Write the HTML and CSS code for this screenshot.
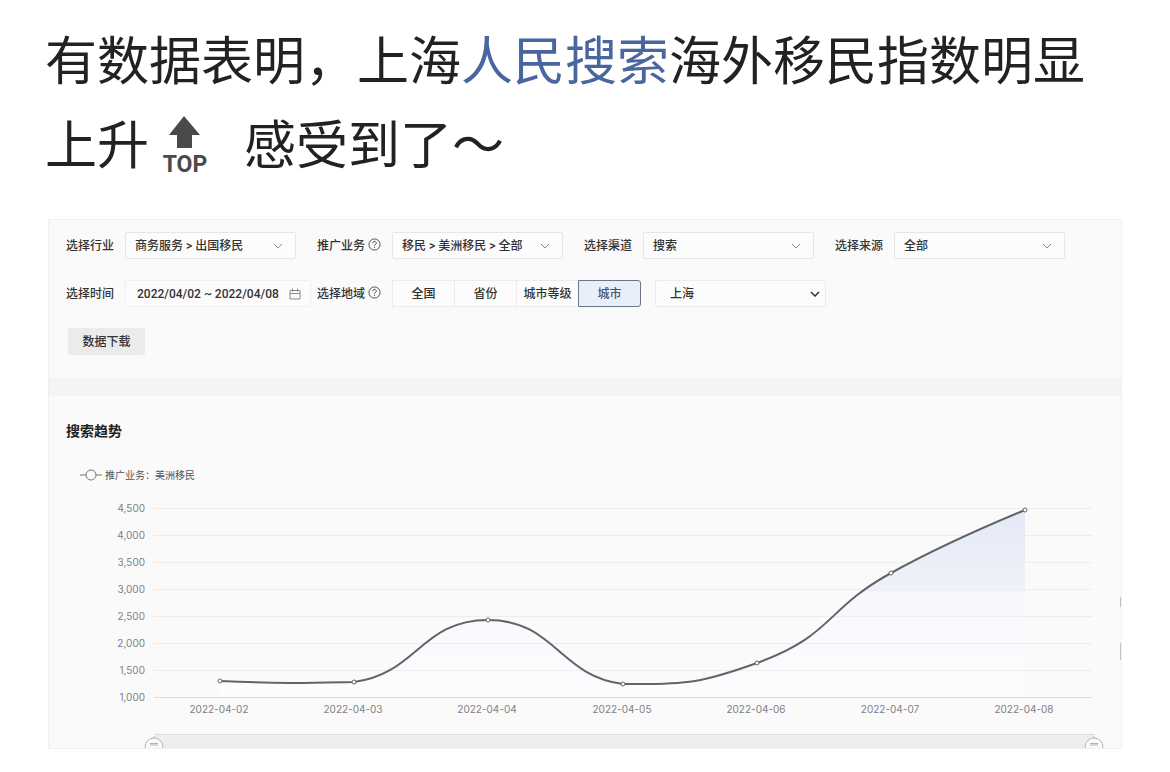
FILE: index.html
```html
<!DOCTYPE html>
<html lang="zh-CN">
<head>
    <meta charset="UTF-8">
    <meta name="viewport" content="width=device-width, initial-scale=1.0">
    <title>搜索趋势</title>
    <link rel="stylesheet" href="styles.css">
</head>
<body>
    <p class="post-text">有数据表明，上海<a href="#search">人民搜索</a>海外移民指数明显上升<svg class="top-icon" viewBox="0 0 52 64" role="img" aria-label="TOP">
            <path d="M25 0 L41 19 H33 V32 H18 V19 H10 Z" fill="#4a4a4a"/>
            <text x="26" y="56" text-anchor="middle">TOP</text>
        </svg>感受到了～</p>

    <main class="panel">
        <!-- Filters -->
        <form class="filters">
            <div class="filter-row">
                <div class="field">
                    <label for="industry">选择行业</label>
                    <div class="select">
                        <select id="industry"><option>商务服务 &gt; 出国移民</option></select>
                        <svg viewBox="0 0 10 6"><path d="M1 1 L5 5 L9 1"/></svg>
                    </div>
                </div>
                <div class="field">
                    <label for="business">推广业务
                        <svg class="help" viewBox="0 0 14 14"><circle cx="7" cy="7" r="6"/><path d="M5 5.7 C5 3 9 3 9 5.5 C9 7 7 6.9 7 8.4 M7 9.6 V10.7"/></svg>
                    </label>
                    <div class="select">
                        <select id="business"><option>移民 &gt; 美洲移民 &gt; 全部</option></select>
                        <svg viewBox="0 0 10 6"><path d="M1 1 L5 5 L9 1"/></svg>
                    </div>
                </div>
                <div class="field">
                    <label for="channel">选择渠道</label>
                    <div class="select">
                        <select id="channel"><option>搜索</option></select>
                        <svg viewBox="0 0 10 6"><path d="M1 1 L5 5 L9 1"/></svg>
                    </div>
                </div>
                <div class="field">
                    <label for="source">选择来源</label>
                    <div class="select">
                        <select id="source"><option>全部</option></select>
                        <svg viewBox="0 0 10 6"><path d="M1 1 L5 5 L9 1"/></svg>
                    </div>
                </div>
            </div>

            <div class="filter-row filter-row-tight">
                <div class="field">
                    <label for="dates">选择时间</label>
                    <div class="date">
                        <input type="text" id="dates" value="2022/04/02 ~ 2022/04/08">
                        <svg viewBox="0 0 12 12"><path d="M1 2.5 H11 V11 H1 Z M1 5.5 H11 M3.5 0.5 V3.5 M8.5 0.5 V3.5"/></svg>
                    </div>
                </div>
                <div class="field">
                    <span class="label" id="region-label">选择地域
                        <svg class="help" viewBox="0 0 14 14"><circle cx="7" cy="7" r="6"/><path d="M5 5.7 C5 3 9 3 9 5.5 C9 7 7 6.9 7 8.4 M7 9.6 V10.7"/></svg>
                    </span>
                    <div class="segments" role="group" aria-labelledby="region-label">
                        <button type="button">全国</button>
                        <button type="button">省份</button>
                        <button type="button">城市等级</button>
                        <button type="button" class="active">城市</button>
                    </div>
                </div>
                <div class="select select-city">
                    <select aria-label="城市"><option>上海</option></select>
                    <svg viewBox="0 0 10 6"><path d="M1 1 L5 5 L9 1"/></svg>
                </div>
            </div>

            <button type="button" class="download">数据下载</button>
        </form>

        <!-- Trend chart -->
        <section class="trend">
            <h2>搜索趋势</h2>
            <div class="legend">
                <svg viewBox="0 0 22 12"><path d="M0 6 H6 M16 6 H22"/><circle cx="11" cy="6" r="5"/></svg>
                推广业务：美洲移民
            </div>
            <svg class="chart" viewBox="0 0 1072 260">
                <defs>
                    <linearGradient id="area" gradientUnits="userSpaceOnUse" x1="0" y1="22" x2="0" y2="209">
                        <stop offset="0" stop-color="#e3e9f6"/>
                        <stop offset="0.43" stop-color="#f0f2f9"/>
                        <stop offset="0.45" stop-color="#f6f8fc"/>
                        <stop offset="1" stop-color="#fcfdfe"/>
                    </linearGradient>
                </defs>

                <path fill="url(#area)" d="M171 193 C238 196 260 195 305 194 C368 186 372 132 439 132 C506 132 510 188 574 196 C640 197 655 194 708 175 C785 147 775 122 842 85 C880 64 930 41 976 22 V209 H171 Z"/>

                <g class="grid">
                    <path d="M105 20.5 H1043 M105 47.5 H1043 M105 74.5 H1043 M105 101.5 H1043 M105 128.5 H1043 M105 155.5 H1043 M105 182.5 H1043"/>
                    <path class="axis" d="M105 209.5 H1043"/>
                </g>

                <g class="y-labels">
                    <text x="96" y="24">4,500</text>
                    <text x="96" y="51">4,000</text>
                    <text x="96" y="78">3,500</text>
                    <text x="96" y="105">3,000</text>
                    <text x="96" y="132">2,500</text>
                    <text x="96" y="159">2,000</text>
                    <text x="96" y="186">1,500</text>
                    <text x="96" y="213">1,000</text>
                </g>

                <g class="x-labels">
                    <text x="170" y="225">2022-04-02</text>
                    <text x="304" y="225">2022-04-03</text>
                    <text x="438" y="225">2022-04-04</text>
                    <text x="573" y="225">2022-04-05</text>
                    <text x="707" y="225">2022-04-06</text>
                    <text x="841" y="225">2022-04-07</text>
                    <text x="975" y="225">2022-04-08</text>
                </g>

                <path class="line" d="M171 193 C238 196 260 195 305 194 C368 186 372 132 439 132 C506 132 510 188 574 196 C640 197 655 194 708 175 C785 147 775 122 842 85 C880 64 930 41 976 22"/>
                <g class="points">
                    <circle cx="171" cy="193" r="2"/>
                    <circle cx="305" cy="194" r="2"/>
                    <circle cx="439" cy="132" r="2"/>
                    <circle cx="574" cy="196" r="2"/>
                    <circle cx="708" cy="175" r="2"/>
                    <circle cx="842" cy="85" r="2"/>
                    <circle cx="976" cy="22" r="2"/>
                </g>

                <!-- Scroll marks on the right edge -->
                <path d="M1071.5 109 V119 M1071.5 155 V172" stroke="#c4c4c6"/>

                <!-- Zoom slider -->
                <rect x="106" y="246" width="940" height="14" fill="#eeeeef"/>
                <path d="M106 246.5 H1046" stroke="#dededf"/>
                <g class="handles">
                    <circle cx="105" cy="259" r="9"/>
                    <path d="M101 255.5 H109 M101 257 H109 M105 248 V250"/>
                    <circle cx="1045" cy="259" r="9"/>
                    <path d="M1041 255.5 H1049 M1041 257 H1049 M1045 248 V250"/>
                </g>
            </svg>
        </section>
    </main>
</body>
</html>
```
FILE: styles.css
```css
body {
    font-family: Inter, "Noto Sans CJK SC", sans-serif;
    background-color: #fff;
    color: #333;
    font-size: 12px;
    margin: 0;
    padding: 16px 48px 24px;
}

/* Post text */
.post-text {
    font-family: "Noto Sans CJK SC", sans-serif;
    font-size: 52px;
    line-height: 84px;
    color: #222;
    margin: 0 -2px 35px -3px;
}

.post-text a {
    color: #49669f;
    text-decoration: none;
}

.top-icon {
    width: 52px;
    height: 64px;
    margin: 0 33px 0 10px;
    vertical-align: -16px;
}

.top-icon text {
    font-family: Roboto, sans-serif;
    font-size: 23px;
    font-weight: bold;
    fill: #4a4a4a;
}

/* Panel */
.panel {
    background-color: #fafafb;
    border: 1px solid #f0f0f1;
    overflow: hidden;
}

.filters {
    padding: 12px 17px 23px;
    border-bottom: 18px solid #f4f4f5;
}

.filter-row {
    display: flex;
    flex-wrap: wrap;
    gap: 21px;
    margin-bottom: 21px;
}

.filter-row-tight {
    column-gap: 6px;
}

.field {
    display: flex;
    align-items: center;
    gap: 11px;
}

.field label, .label {
    display: flex;
    align-items: center;
    gap: 3px;
    padding-bottom: 2px;
    font-weight: 500;
}

.help {
    width: 13px;
    height: 13px;
    fill: none;
    stroke: #444;
}

.select, .date {
    display: grid;
    align-items: center;
    width: 171px;
    height: 27px;
    box-sizing: border-box;
    background-color: #fcfcfc;
    border: 1px solid #e6e6e8;
    border-radius: 2px;
    font-family: Roboto, "Noto Sans CJK SC", sans-serif;
    font-weight: 500;
}

.date {
    width: 186px;
    border-color: #f0f0f1;
}

.select select, .date input {
    grid-area: 1 / 1;
    width: 100%;
    height: 25px;
    padding: 0 9px;
    border: none;
    background: none;
    appearance: none;
    box-sizing: border-box;
    font: inherit;
    color: inherit;
}

.date input {
    padding: 0 11px;
}

.select svg, .date svg {
    grid-area: 1 / 1;
    justify-self: end;
    width: 10px;
    height: 6px;
    margin-right: 12px;
    fill: none;
    stroke: #888;
    pointer-events: none;
}

.date svg {
    width: 12px;
    height: 12px;
    margin-right: 9px;
}

.select-city {
    margin-left: 8px;
    border-color: #ececee;
}

.select-city select {
    padding: 0 14px;
}

.select-city svg {
    margin-right: 5px;
    stroke: #333;
    stroke-width: 1.5;
}

.segments {
    display: flex;
}

.segments button {
    width: 63px;
    height: 27px;
    padding: 0 0 2px;
    background-color: #fcfcfc;
    border: 1px solid #ececee;
    font: inherit;
    font-weight: 500;
    color: inherit;
}

.segments button + button {
    margin-left: -1px;
}

.segments .active {
    background-color: #e9eefb;
    border-color: #6b7488;
    border-radius: 0 3px 3px 0;
    color: #4d556b;
}

.download {
    display: block;
    width: 77px;
    height: 27px;
    margin-left: 2px;
    padding: 0 0 2px;
    background-color: #ebebec;
    border: none;
    border-radius: 2px;
    font: inherit;
    font-weight: 500;
    color: inherit;
}

/* Trend chart */
.trend h2 {
    margin: 0;
    padding: 25px 17px 0;
    font-size: 14px;
    line-height: 20px;
    color: #222;
}

.legend {
    display: flex;
    align-items: center;
    gap: 3px;
    padding: 26px 31px 5px;
    font-size: 10px;
    line-height: 16px;
    color: #555;
}

.legend svg {
    width: 22px;
    height: 12px;
    fill: none;
    stroke: #777;
}

.chart {
    display: block;
    width: 100%;
}

.grid path {
    stroke: #ededef;
}

.grid .axis {
    stroke: #dcdcde;
}

.y-labels, .x-labels {
    font-size: 10px;
    fill: #808084;
}

.y-labels {
    text-anchor: end;
}

.x-labels {
    text-anchor: middle;
}

.line {
    fill: none;
    stroke: #626469;
    stroke-width: 2;
}

.points circle {
    fill: #fff;
    stroke: #626469;
}

.handles {
    fill: #fafafb;
    stroke: #b4b4b6;
}
```
